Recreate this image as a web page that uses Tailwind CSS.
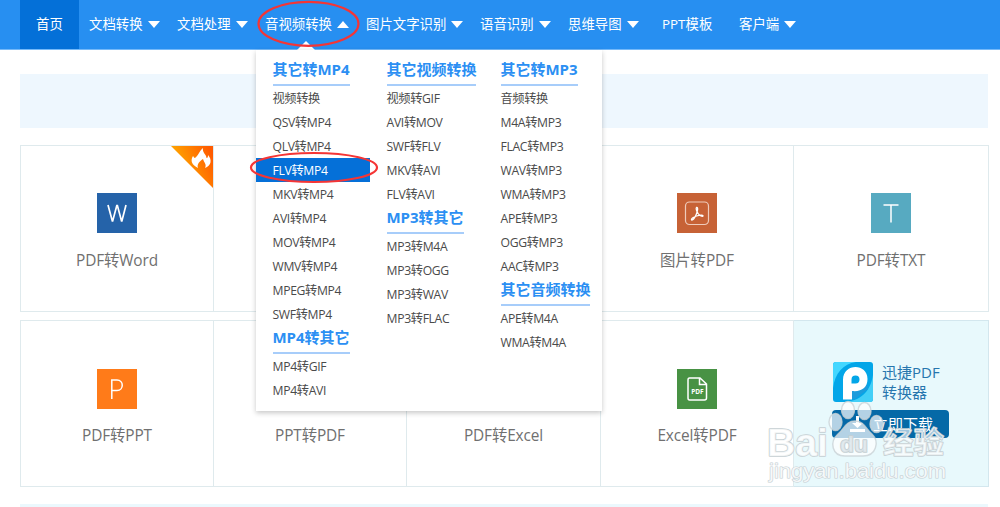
<!DOCTYPE html>
<html lang="zh-CN">
<head>
<meta charset="utf-8">
<title>PDF转换器</title>
<script src="https://cdn.jsdelivr.net/npm/@tailwindcss/browser@4"></script>
</head>
<body class="relative h-[507px] overflow-hidden bg-white font-['Open_Sans','Noto_Sans_CJK_SC',sans-serif] [font-stretch:92%]">

<nav class="flex h-[50px] border-b border-[#75b9f9] bg-[#278ff1] pl-5 text-[13.4px] leading-[49px] whitespace-nowrap text-white [&_svg]:ml-[5px] [&_svg]:mb-px [&_svg]:inline [&_svg]:h-[7px] [&_svg]:w-3 [&_svg]:fill-white">
  <a class="w-[59px] bg-[#0470d8] text-center">首页</a>
  <a class="w-[88px] pl-[10px]">文档转换<svg viewBox="0 0 12 7"><path d="M0 0h12L6 7z"/></svg></a>
  <a class="w-[88px] pl-[10px]">文档处理<svg viewBox="0 0 12 7"><path d="M0 0h12L6 7z"/></svg></a>
  <a class="w-[101px] pl-[10px]">音视频转换<svg viewBox="0 0 12 7"><path d="M0 7h12L6 0z"/></svg></a>
  <a class="w-[114px] pl-[10px]">图片文字识别<svg viewBox="0 0 12 7"><path d="M0 0h12L6 7z"/></svg></a>
  <a class="w-[88px] pl-[10px]">语音识别<svg viewBox="0 0 12 7"><path d="M0 0h12L6 7z"/></svg></a>
  <a class="w-[94px] pl-[10px]">思维导图<svg viewBox="0 0 12 7"><path d="M0 0h12L6 7z"/></svg></a>
  <a class="w-[77px] pl-[10px]">PPT模板</a>
  <a class="pl-[10px]">客户端<svg viewBox="0 0 12 7"><path d="M0 0h12L6 7z"/></svg></a>
</nav>

<main class="px-5 pt-6">
  <div class="h-[54px] w-[968px] bg-[#eef7fe]"></div>

  <div class="mt-[17px] grid w-[969px] grid-cols-[194px_193px_194px_193px_195px] grid-rows-[167px_167px] gap-y-2 text-[15.4px] leading-6 tracking-[-0.12px] text-[#707070]">
    <div class="relative flex flex-col items-center border border-[#dfeaed] pt-[47px]">
      <svg class="absolute top-0 right-0 h-[42px] w-[42px]" viewBox="0 0 42 42">
        <defs><linearGradient id="hot" x1="0" y1="0.4" x2="0.9" y2="0"><stop offset="0.1" stop-color="#ffa800"/><stop offset="1" stop-color="#ff5a00"/></linearGradient></defs>
        <path d="M0 0h42v42z" fill="url(#hot)"/>
        <path d="M27 22C21 19 19 15 22 10c1 1 1 2 2 2 4-3 4-7 8-10-1 5 3.500 6 3.500 10 1.500 0 1.500-2 1.500-3 4.500 5 3 11-3 13 2-4-1-5-2-9-3 2-6.500 5-5 9z" fill="#fff"/>
      </svg>
      <svg class="size-10" viewBox="0 0 40 40"><path fill="#2563a9" d="M0 0h40v40H0z"/><path d="M11 12l4.300 16h.4L19.800 12.500h.6L24.500 28h.4L29 12" fill="none" stroke="#fff" stroke-width="1.700"/></svg>
      <span class="mt-4">PDF转Word</span>
    </div>
    <div class="border-y border-r border-[#dfeaed]"></div>
    <div class="border-y border-r border-[#dfeaed]"></div>
    <div class="flex flex-col items-center border-y border-r border-[#dfeaed] pt-[47px]">
      <svg class="size-10" viewBox="0 0 40 40"><path fill="#c76236" d="M0 0h40v40H0z"/><rect x="8.500" y="9" width="23" height="22.500" rx="4" fill="none" stroke="#efcbbb" stroke-width="1.200"/><path d="M19.500 14.500c2-.5 1 4-.3 7-1.300 3-3.200 5.800-4.500 5.500-1-.8 1.500-3 5-4 3-1 6.500-1.300 6.300 0-.3 1-3.500-.2-5-2.500-1.500-2-2.300-5.500-1.500-6z" fill="none" stroke="#fff" stroke-width="1.300"/></svg>
      <span class="mt-4">图片转PDF</span>
    </div>
    <div class="flex flex-col items-center border-y border-r border-[#dfeaed] pt-[47px]">
      <svg class="size-10" viewBox="0 0 40 40"><path fill="#57aac1" d="M0 0h40v40H0z"/><path d="M12.500 12h15M20 12v17.500" fill="none" stroke="#fff" stroke-width="1.500"/></svg>
      <span class="mt-4">PDF转TXT</span>
    </div>

    <div class="flex flex-col items-center border border-[#dfeaed] pt-[48px]">
      <svg class="size-10" viewBox="0 0 40 40"><path fill="#ff7b19" d="M0 0h40v40H0z"/><path d="M14.800 30V11h5.200c7 0 7 10.500 0 10.500h-5.200" fill="none" stroke="#fff" stroke-width="1.500"/></svg>
      <span class="mt-[15px]">PDF转PPT</span>
    </div>
    <div class="flex flex-col items-center border-y border-r border-[#dfeaed] pt-[103px]"><span>PPT转PDF</span></div>
    <div class="flex flex-col items-center border-y border-r border-[#dfeaed] pt-[103px]"><span>PDF转Excel</span></div>
    <div class="flex flex-col items-center border-y border-r border-[#dfeaed] pt-[48px]">
      <svg class="size-10" viewBox="0 0 40 40"><path fill="#489244" d="M0 0h40v40H0z"/><path d="M12.500 9h10.500l6.500 6v14q0 2-2 2h-15q-1.500 0-1.500-2V11q0-2 1.500-2zM22.500 9v6.500h7" fill="none" stroke="#fff" stroke-width="1.500"/><text x="20.300" y="25.300" font-size="6.500" font-weight="700" text-anchor="middle" fill="#fff">PDF</text></svg>
      <span class="mt-[15px]">Excel转PDF</span>
    </div>
    <div class="border-y border-r border-[#d3e7ee] bg-[#e8f9fc] pt-[41px] pl-[39px] text-[15px] tracking-normal">
      <div class="flex gap-[9px] leading-5 text-[#2676ae]">
        <svg class="size-10" viewBox="0 0 40 40"><rect width="40" height="40" rx="3" fill="#03a6e8"/><path d="M3 0h20C10 2 2 11 0 26V3q0-3 3-3z" fill="#43d7ff"/><path d="M40 13v24q0 3-3 3H13C30 38 38 27 40 13z" fill="#43cff7"/><path d="M19 29l8-1 7-6 1 5-13 10h-3z" fill="#1d9cdc"/><path fill-rule="evenodd" d="M10 37.500V18C10 1 34.500 1 34.500 17c0 8.500-6 13-15.500 12v8.500zM22.500 13.500a4 4 0 0 0-4 4V21.500h4a4 4 0 0 0 0-8z" fill="#fff"/></svg>
        <div>迅捷PDF<br>转换器</div>
      </div>
      <div class="mt-2 -ml-px flex h-7 w-[117px] items-center rounded bg-[#0569a7] pl-[17px] text-white">
        <svg class="h-[18px] w-[17px]" viewBox="0 0 17 18"><path d="M7 1h3v7h4l-5.500 5L3 8h4zM1 14h15v3H1z" fill="#fff"/></svg>
        <span class="ml-[7px]">立即下载</span>
      </div>
    </div>
  </div>
  <div class="mt-[17px] h-3 w-[968px] bg-[#ebf8fd]"></div>
</main>

<!-- dropdown -->
<div class="absolute top-[41px] left-[297px] h-0 w-0 border-x-[9px] border-b-[9px] border-x-transparent border-b-white"></div>
<div class="absolute top-[50px] left-[256px] flex h-[361px] w-[346px] bg-white pt-2 text-[12.2px] leading-[26px] tracking-[-0.33px] whitespace-nowrap text-[#4a4a4a] shadow-[0_2px_5px_rgba(0,0,0,0.22)] [font-stretch:100%] [&_h3]:ml-[16.500px] [&_h3]:h-7 [&_h3]:w-fit [&_h3]:border-b-2 [&_h3]:border-[#a7cdfa] [&_h3]:text-[15px] [&_h3]:leading-[23px] [&_h3]:font-bold [&_h3]:tracking-[-0.02px] [&_h3]:text-[#2b8ff3] [&_p]:h-6 [&_p]:pl-[16.500px]">
  <section class="w-[114px]">
    <h3>其它转MP4</h3>
    <p>视频转换</p><p>QSV转MP4</p><p>QLV转MP4</p>
    <p class="bg-[#0570d8] text-white">FLV转MP4</p>
    <p>MKV转MP4</p><p>AVI转MP4</p><p>MOV转MP4</p><p>WMV转MP4</p><p>MPEG转MP4</p><p>SWF转MP4</p>
    <h3>MP4转其它</h3>
    <p>MP4转GIF</p><p>MP4转AVI</p>
  </section>
  <section class="w-[114px]">
    <h3>其它视频转换</h3>
    <p>视频转GIF</p><p>AVI转MOV</p><p>SWF转FLV</p><p>MKV转AVI</p><p>FLV转AVI</p>
    <h3>MP3转其它</h3>
    <p>MP3转M4A</p><p>MP3转OGG</p><p>MP3转WAV</p><p>MP3转FLAC</p>
  </section>
  <section class="w-[114px]">
    <h3>其它转MP3</h3>
    <p>音频转换</p><p>M4A转MP3</p><p>FLAC转MP3</p><p>WAV转MP3</p><p>WMA转MP3</p><p>APE转MP3</p><p>OGG转MP3</p><p>AAC转MP3</p>
    <h3>其它音频转换</h3>
    <p>APE转M4A</p><p>WMA转M4A</p>
  </section>
</div>

<!-- red marks and watermark -->
<svg class="pointer-events-none absolute inset-0 h-[507px] w-[1000px]" viewBox="0 0 1000 507">
  <g fill="none" stroke="#f53535" stroke-width="2.200">
    <ellipse cx="308.500" cy="23.800" rx="50" ry="22"/>
    <ellipse cx="314" cy="167.500" rx="63" ry="14.500"/>
  </g>
  <g fill="#fff" fill-opacity="0.7" stroke="#c9d2d6" stroke-opacity="0.8" stroke-width="1.400">
    <ellipse cx="835.500" cy="422" rx="6.500" ry="8.500"/><ellipse cx="848" cy="410" rx="6.500" ry="8.500"/><ellipse cx="864.500" cy="411" rx="6.500" ry="8.500"/><ellipse cx="876.500" cy="424" rx="6.500" ry="8.500"/>
    <path d="M855 421c9 0 11 8 17 13 8 8 4 22-9 22h-18c-13 0-16-14-7-22 6-5 8-13 17-13z"/>
  </g>
  <g fill="#fff" fill-opacity="0.8" stroke="#c5cfd3" stroke-width="1.600" stroke-linejoin="round" paint-order="stroke" font-family="Liberation Sans">
    <text x="767" y="456" font-size="39" font-weight="700" textLength="61" lengthAdjust="spacingAndGlyphs">Bai</text>
    <text x="840" y="452" font-size="22" font-weight="700" fill="#dfe7eb" textLength="28" lengthAdjust="spacingAndGlyphs">du</text>
    <text x="883" y="453" style="font-family:'Noto Sans CJK SC'" font-size="30" font-weight="700" fill-opacity="0.65" textLength="61" lengthAdjust="spacingAndGlyphs">经验</text>
    <text x="769" y="478" font-size="21" textLength="177" stroke-width="1.200" lengthAdjust="spacingAndGlyphs">jingyan.baidu.com</text>
  </g>
</svg>
</body>
</html>
